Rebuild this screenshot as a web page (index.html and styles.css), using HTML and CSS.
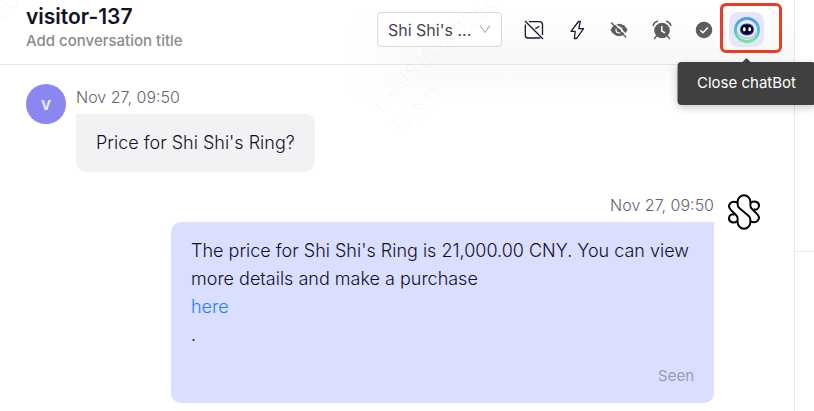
FILE: index.html
```html
<!DOCTYPE html>
<html lang="en">
<head>
<meta charset="utf-8">
<title>visitor-137</title>
<link rel="stylesheet" href="styles.css">
</head>
<body>
<div class="app">
  <main class="chat">
    <header class="header">
      <div class="heading">
        <h1 class="name">visitor-137</h1>
        <p class="subtitle">Add conversation title</p>
      </div>
      <div class="select-wrap">
        <select class="select" aria-label="Assignee"><option>Shi Shi's ...</option></select>
        <svg class="chevron" viewBox="0 0 12 10" aria-hidden="true"><path d="M1 1.5 6 8.5 11 1.5"/></svg>
      </div>
      <div class="tools">
        <button class="tool" type="button" aria-label="Unsubscribe">
          <svg class="line" viewBox="0 0 22 22"><path d="M6 2.700H16.500Q19.500 2.700 19.500 5.700V16M17.200 19H5Q2.300 19 2.300 16V5.500"/><path d="M2 2 20 20M12.300 9.800 16.300 7.300"/></svg>
        </button>
        <button class="tool" type="button" aria-label="Quick actions">
          <svg class="line" viewBox="0 0 22 22"><path d="M12.500 2.500 5 12.300H9.200L8.400 19.500H10.600L17.500 9.700H12.900L14.200 2.500Z"/></svg>
        </button>
        <button class="tool" type="button" aria-label="Hide">
          <svg class="solid" viewBox="0 0 22 22"><path d="M2.500 11C6.500 2.800 15.500 2.800 19.500 11C15.500 19.200 6.500 19.200 2.500 11Z"/><circle class="cut" cx="11" cy="11" r="3.600"/><circle cx="11" cy="11" r="2.400"/><path class="gap" d="M5.200 2.800 19.200 16.800"/><path class="slash" d="M3.500 4 17.800 18"/></svg>
        </button>
        <button class="tool" type="button" aria-label="Snooze">
          <svg class="solid" viewBox="0 0 22 22"><circle cx="11" cy="11.500" r="7.800"/><path class="slash" d="M2.200 6.500Q3 3.300 6.500 2.300M19.800 6.500Q19 3.300 15.500 2.300M5.500 17 3.500 19.600M16.500 17 18.500 19.600"/><path class="mark" d="M10.800 7V12L14 13.800"/></svg>
        </button>
        <button class="tool" type="button" aria-label="Resolve">
          <svg class="solid" viewBox="0 0 22 22"><circle cx="11" cy="11" r="8.300"/><path class="mark" d="M7.300 11.200 10 13.800 14.900 8.500"/></svg>
        </button>
      </div>
      <div class="bot-wrap">
        <button class="bot" type="button" aria-describedby="bot-tip" aria-label="Close chatBot">
          <svg viewBox="0 0 26 26" aria-hidden="true">
            <defs>
              <linearGradient id="ring" x1="0" y1="0" x2="0" y2="1"><stop offset="0" stop-color="#429fe8"/><stop offset=".5" stop-color="#4bc4cf"/><stop offset="1" stop-color="#6deb91"/></linearGradient>
              <linearGradient id="face" x1="0" y1="0" x2="1" y2="0"><stop offset="0" stop-color="#5ab9ee"/><stop offset=".5" stop-color="#4c48c9"/><stop offset="1" stop-color="#b59af0"/></linearGradient>
            </defs>
            <circle cx="13" cy="13" r="11.600" fill="#e7e5fa" stroke="url(#ring)" stroke-width="2.800"/>
            <ellipse cx="13" cy="14" rx="9.200" ry="8" fill="#c4c3db"/>
            <ellipse cx="13" cy="12.500" rx="9" ry="7.800" fill="#f4f3fb"/>
            <rect x="5.500" y="6.500" width="15" height="12" rx="6" fill="url(#face)"/>
            <rect x="6.500" y="7.500" width="13" height="10" rx="5" fill="#080822"/>
            <rect x="9" y="10.300" width="2.600" height="4" rx="1.300" fill="#fff"/>
            <rect x="14.400" y="10.300" width="2.600" height="4" rx="1.300" fill="#fff"/>
          </svg>
        </button>
        <span class="highlight"></span>
        <span class="tooltip" id="bot-tip" role="tooltip">Close chatBot</span>
      </div>
    </header>

    <section class="messages">
      <article class="message">
        <span class="avatar">v</span>
        <div class="content">
          <time class="time">Nov 27, 09:50</time>
          <div class="bubble">Price for Shi Shi's Ring?</div>
        </div>
      </article>
      <article class="message own">
        <svg class="logo" viewBox="0 0 40 40" role="img" aria-label="Shi Shi's">
          <path d="M26.600 29.400C33 32.400 37.200 26.400 33.400 22.400L27.800 16.800Q26.400 15.400 26.400 13.500V9.700A6.400 6.400 0 0 0 13.600 9.700V12Q13.600 14.500 15.500 16.200L24.500 23.800Q26.400 25.500 26.400 28V30.300A6.400 6.400 0 0 1 13.600 30.300V26.500Q13.600 24.600 12.200 23.200L6.600 17.600C2.800 13.600 7 7.600 13.400 10.600"/>
          <path d="M26.800 10.600C31 8 35.400 10.500 35 14C34.700 17 32 18.200 30.400 17.400"/>
          <path d="M13.200 29.400C9 32 4.600 29.500 5 26C5.300 23 8 21.800 9.600 22.600"/>
        </svg>
        <div class="content">
          <time class="time">Nov 27, 09:50</time>
          <div class="bubble">
            <div>The price for Shi Shi's Ring is 21,000.00 CNY. You can view more details and make a purchase</div>
            <div><a class="link" href="#">here</a></div>
            <div>.</div>
            <div class="status">Seen</div>
          </div>
        </div>
      </article>
    </section>
  </main>
  <aside class="side"><div class="side-top"></div></aside>
  <div class="watermark" aria-hidden="true">1709816249256<br>石杏林</div>
  <div class="watermark edge" aria-hidden="true">1709816249256</div>
</div>
</body>
</html>
```

FILE: styles.css
```css
* {
  box-sizing: border-box;
}

body {
  margin: 0;
  overflow: hidden;
  background: #fff;
  color: #141127;
  font-family: Inter, "Noto Sans CJK SC", sans-serif;
}

button {
  padding: 0;
  border: 0;
  background: none;
}

svg {
  display: block;
  fill: none;
}

.app {
  position: relative;
  display: grid;
  grid-template-columns: minmax(0, 1fr) 20px;
  min-height: 100vh;
  overflow: hidden;
}

.header {
  position: relative;
  display: flex;
  align-items: center;
  padding: 6px 30px 11px 26px;
  border-bottom: 1px solid #e6e6e8;
}

.header::before {
  content: "";
  position: absolute;
  z-index: -1;
  top: 12px;
  right: 0;
  left: 350px;
  height: 90px;
  background: linear-gradient(90deg, #fff, #fff0 80px), linear-gradient(#fff, #f8f8f8 50%, #fff);
}

.heading {
  flex: 1;
}

.name {
  margin: 0;
  font-size: 21px;
  font-weight: 600;
  line-height: 22px;
}

.subtitle {
  margin: 0;
  color: #8b8b8b;
  font-size: 15px;
  font-weight: 500;
  line-height: 25px;
}

.select-wrap {
  position: relative;
  width: 125px;
  margin-right: 21px;
}

.select {
  display: block;
  width: 100%;
  height: 35px;
  padding: 0 28px 0 10px;
  border: 1px solid #d9d9dc;
  border-radius: 4px;
  background: #fff;
  color: #454354;
  font: 400 16px Inter, sans-serif;
  appearance: none;
}

.chevron {
  position: absolute;
  top: 12px;
  right: 11px;
  width: 12px;
  height: 10px;
  stroke: #a09fae;
  pointer-events: none;
}

.tools {
  display: flex;
  justify-content: space-between;
  width: 192px;
  margin-right: 14px;
}

.tool svg {
  width: 22px;
  height: 22px;
}

.line {
  stroke: #17142b;
  stroke-width: 1.3;
  stroke-linejoin: round;
}

.solid {
  fill: #5d5d61;
}

.solid .cut {
  fill: #f9f9f9;
}

.solid path.gap {
  stroke: #fafafa;
  stroke-width: 1.5;
}

.solid path.slash {
  fill: none;
  stroke: #5d5d61;
  stroke-width: 1.5;
  stroke-linecap: round;
}

.solid path.mark {
  fill: none;
  stroke: #fff;
  stroke-width: 1.5;
}

.bot-wrap {
  position: relative;
}

.bot {
  display: grid;
  place-items: center;
  width: 35px;
  height: 35px;
  border-radius: 9px;
  background: #e7e5fa;
}

.bot svg {
  width: 26px;
  height: 26px;
}

.highlight {
  position: absolute;
  top: -9px;
  left: -9px;
  width: 62px;
  height: 50px;
  border: 3px solid #ee3b24;
  border-radius: 6px;
  pointer-events: none;
}

.tooltip {
  position: absolute;
  z-index: 2;
  top: 50px;
  left: 50%;
  padding: 9px 20px 11px;
  border-radius: 4px;
  background: #404040;
  box-shadow: 0 3px 8px #0003;
  color: #fff;
  font-size: 15px;
  line-height: 23px;
  white-space: nowrap;
  transform: translateX(-50%);
}

.tooltip::before {
  content: "";
  position: absolute;
  bottom: 100%;
  left: 50%;
  border: 4px solid transparent;
  border-top: 0;
  border-bottom-color: #404040;
  transform: translateX(-50%);
}

.messages {
  display: flex;
  flex-direction: column;
  gap: 20px;
  padding: 19px 30px 8px 26px;
}

.message {
  display: flex;
  gap: 10px;
}

.own {
  flex-direction: row-reverse;
}

.avatar {
  display: grid;
  flex: none;
  place-items: center;
  width: 40px;
  height: 40px;
  border-radius: 50%;
  background: #8b87f0;
  color: #eeedfd;
  font-size: 17px;
  font-weight: 600;
}

.logo {
  flex: none;
  width: 40px;
  height: 40px;
  stroke: #050505;
  stroke-width: 2;
  stroke-linecap: round;
}

.content {
  display: flex;
  flex-direction: column;
  align-items: flex-start;
  gap: 4px;
}

.own .content {
  align-items: flex-end;
  max-width: 543px;
}

.time {
  color: #656472;
  font-size: 16px;
  font-weight: 300;
  line-height: 26px;
}

.bubble {
  padding: 15px 20px;
  border-radius: 0 10px 10px;
  background: #f2f2f4;
  font-size: 18px;
  font-weight: 300;
  line-height: 28px;
}

.own .bubble {
  border-radius: 10px 0 10px 10px;
  background: #dadeff;
}

.link {
  color: #1a80ff;
  text-decoration: none;
}

.status {
  margin-top: 15px;
  color: #9b9baf;
  font-size: 15px;
  font-weight: 400;
  line-height: 24px;
  text-align: right;
}

.side {
  border-left: 1px solid #e6e6e8;
}

.side-top {
  height: 252px;
  border-bottom: 1px solid #e6e6e8;
}

.watermark {
  position: absolute;
  top: 88px;
  left: 382px;
  color: #00000007;
  font-size: 22px;
  line-height: 32px;
  pointer-events: none;
  transform: rotate(-42deg);
  transform-origin: 0 50%;
}

.edge {
  top: 92px;
  left: -108px;
}
```
